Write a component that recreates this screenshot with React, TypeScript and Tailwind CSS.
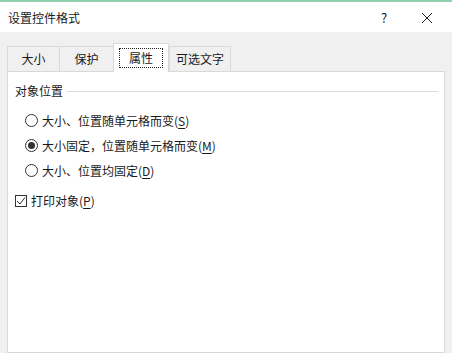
const FONT = '"Microsoft YaHei", "Noto Sans CJK SC", "Noto Sans", sans-serif';

const TABS = [
  { label: '大小', w: 52 },
  { label: '保护', w: 54 },
  { label: '属性', w: 56, active: true },
  { label: '可选文字', w: 62 },
];

const OPTIONS = [
  { text: '大小、位置随单元格而变', key: 'S', checked: false },
  { text: '大小固定，位置随单元格而变', key: 'M', checked: true },
  { text: '大小、位置均固定', key: 'D', checked: false },
];

function Radio({ checked }: { checked: boolean }) {
  return (
    <span className="w-[13px] h-[13px] rounded-full border border-[#333333] bg-white flex items-center justify-center shrink-0">
      {checked && <span className="w-[7px] h-[7px] rounded-full bg-[#333333]" />}
    </span>
  );
}

export default function App() {
  return (
    <div
      className="w-[452px] h-[353px] overflow-hidden flex flex-col bg-[#f0f0f0] text-[12px] text-[#1a1a1a]"
      style={{ fontFamily: FONT }}
    >
      {/* title bar */}
      <div className="h-[32px] shrink-0 bg-white border-t-2 border-[#8fd0b0] flex items-center pl-[8px] pt-[2px]">
        <span className="flex-1">设置控件格式</span>
        <span className="w-[10px] text-center text-[13px] mr-[32px]">?</span>
        <svg width="12" height="12" viewBox="0 0 12 12" className="mr-[19px]">
          <path d="M1 1L11 11M11 1L1 11" stroke="#222" strokeWidth="1" />
        </svg>
      </div>

      {/* tabs */}
      <div className="flex items-end px-[7px] pt-[11px] shrink-0">
        {TABS.map((t) =>
          t.active ? (
            <div
              key={t.label}
              className="relative z-10 -mb-px h-[29px] bg-white border border-b-0 border-[#d9d9d9] flex items-center justify-center"
              style={{ width: t.w }}
            >
              <span className="border border-dotted border-[#222] px-[9px] h-[20px] flex items-center leading-none">
                {t.label}
              </span>
            </div>
          ) : (
            <div
              key={t.label}
              className="h-[25px] border border-b-0 border-r-0 last:border-r border-[#d9d9d9] flex items-center justify-center"
              style={{ width: t.w }}
            >
              {t.label}
            </div>
          )
        )}
      </div>

      {/* panel */}
      <div className="mx-[7px] flex-1 bg-white border border-[#d9d9d9] flex flex-col">
        <div className="flex items-center h-[20px] mt-[9px] pl-[7px] pr-[6px]">
          <span>对象位置</span>
          <span className="flex-1 h-px bg-[#dcdcdc] ml-[4px]" />
        </div>

        <div className="flex flex-col mt-[7px] pl-[17px]">
          {OPTIONS.map((o) => (
            <div key={o.key} className="h-[25px] flex items-center gap-[4px]">
              <Radio checked={o.checked} />
              <span>
                {o.text}(<span className="underline underline-offset-2">{o.key}</span>)
              </span>
            </div>
          ))}
        </div>

        <div className="h-[26px] mt-[5px] pl-[7px] flex items-center gap-[4px]">
          <span className="w-[12px] h-[12px] border border-[#333333] bg-white flex items-center justify-center shrink-0">
            <svg width="10" height="10" viewBox="0 0 10 10">
              <path d="M1 5L4 8L9 1.5" fill="none" stroke="#333" strokeWidth="1" />
            </svg>
          </span>
          <span>
            打印对象(<span className="underline underline-offset-2">P</span>)
          </span>
        </div>
      </div>
    </div>
  );
}
